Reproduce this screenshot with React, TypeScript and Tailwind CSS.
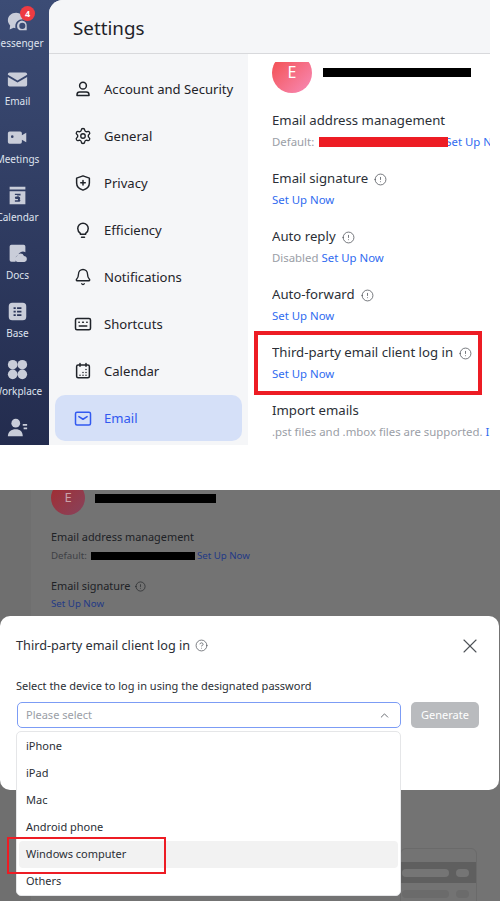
import { Bell, ChevronUp, CircleHelp, Info, Settings, X } from "lucide-react";
import type { ReactNode } from "react";

const font = "font-['Noto_Sans','Liberation_Sans',sans-serif]";

function Glyph({ children, size = 18 }: { children: ReactNode; size?: number }) {
  return (
    <svg
      viewBox="0 0 24 24"
      width={size}
      height={size}
      fill="none"
      stroke="currentColor"
      strokeWidth="2"
      strokeLinecap="round"
      strokeLinejoin="round"
    >
      {children}
    </svg>
  );
}

const railIcons: Record<string, ReactNode> = {
  messenger: (
    <>
      <path
        fillRule="evenodd"
        d="M10.500 2C5 2 1 5.800 1 10.500c0 2.300 1 4.400 2.600 6L3 21l4.600-1.800c.7.200 1.400.3 2.100.4a8 8 0 0 1-.2-2c0-4.700 3.500-8.100 8-8.100.8 0 1.600.1 2.300.4C18.700 5.300 15.100 2 10.500 2Z"
      />
      <path
        fillRule="evenodd"
        d="M17.500 11a6 6 0 0 0-6 6.200c0 2.400 1.200 4 3 4.800h8V17a5.500 5.500 0 0 0-5-6Zm0 2.500a3.500 3.500 0 1 1 0 7 3.500 3.500 0 0 1 0-7Z"
      />
    </>
  ),
  email: <path d="M3 4h18a2 2 0 0 1 2 2v.6L12 13 1 6.600V6a2 2 0 0 1 2-2Zm-2 5 11 6.400L23 9v9a2 2 0 0 1-2 2H3a2 2 0 0 1-2-2Z" />,
  meetings: (
    <path
      fillRule="evenodd"
      d="M3 5h12a2 2 0 0 1 2 2v2.500l5-3V17.500l-5-3V17a2 2 0 0 1-2 2H3a2 2 0 0 1-2-2V7a2 2 0 0 1 2-2Zm3 4.500a1.500 1.500 0 1 0 0 3 1.500 1.500 0 0 0 0-3Z"
    />
  ),
  calendar: (
    <path
      fillRule="evenodd"
      d="M3 2h18v3H3Zm0 5h18v15H3Zm6 3v1.500h4.500V13H10.500a1.500 1.500 0 0 0 0 3h2v1.500H9V19h4.500a1.500 1.500 0 0 0 1-2.800 1.500 1.500 0 0 0-1-2.700h-2V12h4v-2Z"
    />
  ),
  docs: (
    <>
      <path d="M5 2h14a2 2 0 0 1 2 2v6.500a6 6 0 0 0-8.500 3.500A5 5 0 0 0 10 21.500H5a2 2 0 0 1-2-2V4a2 2 0 0 1 2-2Z" />
      <path d="M15.500 12a4 4 0 0 1 3.800 2.800 3.500 3.500 0 0 1 .7 6.900h-8a3.500 3.500 0 0 1-.5-6.900 4 4 0 0 1 4-2.800Z" />
    </>
  ),
  base: (
    <path
      fillRule="evenodd"
      d="M6 2h12a4 4 0 0 1 4 4v12a4 4 0 0 1-4 4H6a4 4 0 0 1-4-4V6a4 4 0 0 1 4-4Zm1.500 5v2H10V7Zm4 0v2h5V7Zm-4 4v2H10v-2Zm4 0v2h5v-2Zm-4 4v2H10v-2Zm4 0v2h5v-2Z"
    />
  ),
  workplace: (
    <>
      <circle cx="6.500" cy="6.500" r="5.500" />
      <circle cx="17.500" cy="6.500" r="5.500" />
      <circle cx="6.500" cy="17.500" r="5.500" />
      <circle cx="17.500" cy="17.500" r="5.500" />
    </>
  ),
  contacts: (
    <>
      <circle cx="10" cy="7" r="5" />
      <path d="M1 22c0-5 4-8 9-8s8 3 8 8Z" />
      <path d="M18 8h5v2h-5Zm1 4h4v2h-4Z" />
    </>
  ),
};

const rail = [
  { id: "messenger", label: "Messenger", badge: "4" },
  { id: "email", label: "Email" },
  { id: "meetings", label: "Meetings" },
  { id: "calendar", label: "Calendar" },
  { id: "docs", label: "Docs" },
  { id: "base", label: "Base" },
  { id: "workplace", label: "Workplace" },
  { id: "contacts", label: "" },
];

const nav: { label: string; icon: ReactNode; active?: boolean }[] = [
  {
    label: "Account and Security",
    icon: (
      <Glyph>
        <circle cx="12" cy="7.500" r="4.500" />
        <path d="M4 20.500v-1a3.500 3.500 0 0 1 3.500-3.500h9a3.500 3.500 0 0 1 3.500 3.500v1Z" />
      </Glyph>
    ),
  },
  { label: "General", icon: <Settings size={18} strokeWidth={1.8} /> },
  {
    label: "Privacy",
    icon: (
      <Glyph>
        <path d="M12 2.500 20.500 5.500v6.500c0 4.800-3.500 8-8.500 9.500C7 20 3.500 16.800 3.500 12V5.500Z" />
        <path d="M12 8.500v6M9 11.500h6" />
      </Glyph>
    ),
  },
  {
    label: "Efficiency",
    icon: (
      <Glyph>
        <path d="M8.500 16.500C6.500 15 5 13 5 10a7 7 0 0 1 14 0c0 3-1.500 5-3.500 6.500v1h-7Z" />
        <path d="M10 21.500h4" />
      </Glyph>
    ),
  },
  { label: "Notifications", icon: <Bell size={18} strokeWidth={1.8} /> },
  {
    label: "Shortcuts",
    icon: (
      <Glyph>
        <rect x="2" y="4.500" width="20" height="15" rx="2" />
        <path d="M6.500 9.500h.5M11.500 9.500h1M17 9.500h.5M7 14.500h10" />
      </Glyph>
    ),
  },
  {
    label: "Calendar",
    icon: (
      <Glyph>
        <rect x="3.500" y="4" width="17" height="17" rx="2" />
        <path d="M8 2v3.500M16 2v3.500M16 10v.1M12 14v.1M16 14v.1M8 17.500v.1M12 17.500v.1M16 17.500v.1" />
      </Glyph>
    ),
  },
  {
    label: "Email",
    active: true,
    icon: (
      <Glyph size={19}>
        <rect x="2" y="3.500" width="20" height="17" rx="2" />
        <path d="M6.500 9.500 12 13l5.500-3.500" />
      </Glyph>
    ),
  },
];

function InfoTip() {
  return <Info size={13} strokeWidth={1.4} className="text-[#4b4f56] rotate-180" />;
}

function Link({ children }: { children: ReactNode }) {
  return <span className="text-[#2f6bf0]">{children}</span>;
}

function Setting({ title, tip, children }: { title: string; tip?: boolean; children: ReactNode }) {
  return (
    <div className="flex flex-col gap-px mb-[17px]">
      <div className="h-5 flex items-center gap-[6px] text-[13.2px] text-[#2b2f36] whitespace-nowrap">
        {title}
        {tip && <InfoTip />}
      </div>
      <div className="h-5 flex items-center gap-[3px] text-[11.4px] text-[#9a9ea6] whitespace-nowrap">{children}</div>
    </div>
  );
}

function Redacted({ className }: { className: string }) {
  return <div className={`absolute ${className}`} />;
}

export default function App() {
  return (
    <div className={`w-[500px] h-[901px] bg-white overflow-hidden flex flex-col ${font}`}>
      {/* Top capture: settings window */}
      <div className="h-[445px] flex shrink-0 overflow-hidden relative">
        <div className="w-[490px] flex bg-gradient-to-b from-[#3c4c75] to-[#232c4e]">
          <div className="w-[49px] shrink-0 overflow-hidden">
            <div className="w-[49px] ml-[-7px] flex flex-col items-center pt-[10px]">
              {rail.map((r) => (
                <div key={r.id} className="h-[58px] w-full shrink-0 flex flex-col items-center relative">
                  <svg viewBox="0 0 24 24" width={21} height={21} fill="#c9cdd9" className="mt-[1px]">
                    {railIcons[r.id]}
                  </svg>
                  <span className="mt-[4px] text-[10px] leading-[14px] text-[#dfe3ee] whitespace-nowrap">{r.label}</span>
                  {r.badge && (
                    <span className="absolute left-[27px] top-[-4px] w-[15px] h-[15px] rounded-full bg-[#ee3b42] text-white text-[9px] font-bold flex items-center justify-center">
                      {r.badge}
                    </span>
                  )}
                </div>
              ))}
            </div>
          </div>
          <div className="flex-1 flex flex-col rounded-tl-[14px] overflow-hidden bg-white">
            <div className="h-[54px] shrink-0 bg-[#f5f6f8] border-b border-[#d8d9dc] flex items-center pl-6 pt-[3px] text-[18.8px] text-[#1f2329]">
              Settings
            </div>
            <div className="flex-1 flex min-h-0">
              <div className="w-[199px] shrink-0 bg-[#f5f6f8] px-[6px] pt-3 flex flex-col gap-px">
                {nav.map((n) => (
                  <div
                    key={n.label}
                    className={`h-[46px] shrink-0 flex items-center gap-[12px] pl-[19px] rounded-[10px] text-[13.1px] whitespace-nowrap ${
                      n.active ? "bg-[#d5e0f8] text-[#3259f0]" : "text-[#1f2329]"
                    }`}
                  >
                    <span className="w-[18px] flex justify-center">{n.icon}</span>
                    <span className="pt-[2px]">{n.label}</span>
                  </div>
                ))}
              </div>
              <div className="flex-1 min-w-0 pt-2 pl-6 overflow-hidden">
                <div className="h-full overflow-hidden">
                  <div className="flex items-center gap-[11px] mt-[-9px] mb-[18px] h-10">
                    <div className="w-10 h-10 shrink-0 rounded-full bg-gradient-to-br from-[#f24545] to-[#f78ab8] text-white flex items-center justify-center text-[16px] pb-[2px]">
                      E
                    </div>
                  </div>
                  <Setting title="Email address management">
                    <span className="mr-[133px]">Default:</span>
                    <span className="text-[#2f6bf0] ml-[-5px]">Set Up Now</span>
                  </Setting>
                  <Setting title="Email signature" tip>
                    <Link>Set Up Now</Link>
                  </Setting>
                  <Setting title="Auto reply" tip>
                    Disabled <Link>Set Up Now</Link>
                  </Setting>
                  <Setting title="Auto-forward" tip>
                    <Link>Set Up Now</Link>
                  </Setting>
                  <Setting title="Third-party email client log in" tip>
                    <Link>Set Up Now</Link>
                  </Setting>
                  <Setting title="Import emails">
                    .pst files and .mbox files are supported. <Link>Import</Link>
                  </Setting>
                </div>
              </div>
            </div>
          </div>
        </div>
        {/* annotations */}
        <Redacted className="left-[323px] top-[68px] w-[148px] h-[9px] bg-black" />
        <Redacted className="left-[319px] top-[137px] w-[129px] h-[10px] bg-[#ed1c24]" />
        <Redacted className="left-[254px] top-[331px] w-[228px] h-[64px] border-[4.5px] border-[#ed1c24]" />
      </div>

      <div className="h-[45px] shrink-0 bg-white" />

      {/* Bottom capture: dialog over dimmed page */}
      <div className="flex-1 bg-[#737373] relative overflow-hidden flex">
        <div className="w-[31px] shrink-0 bg-[#6f6f6f]" />
        <div className="pl-5 flex-1 min-w-0">
          <div className="w-[34px] h-[34px] mt-[-9px] rounded-full bg-gradient-to-br from-[#a3282c] to-[#87425c] text-[#c9a3a8] flex items-center justify-center text-[13px]">
            E
          </div>
          <div className="mt-[12px] h-5 flex items-center text-[10.9px] text-[#202226] whitespace-nowrap">
            Email address management
          </div>
          <div className="h-[18px] flex items-center text-[9.7px] text-[#3e4045] whitespace-nowrap">
            <span className="mr-[110px]">Default:</span>
            <span className="text-[#233a86]">Set Up Now</span>
          </div>
          <div className="mt-[11px] h-[20px] flex items-center gap-[5px] text-[10.9px] text-[#202226] whitespace-nowrap">
            Email signature
            <Info size={11} strokeWidth={1.4} className="rotate-180" />
          </div>
          <div className="h-[16px] flex items-center text-[9.7px] text-[#233a86]">Set Up Now</div>
        </div>
        <Redacted className="left-[95px] top-[4px] w-[121px] h-[9px] bg-black" />
        <Redacted className="left-[91px] top-[62px] w-[104px] h-[8px] bg-black" />

        {/* faint page behind the dialog */}
        <div className="absolute left-[400px] top-[358px] w-[77px] h-[60px] border border-[#6a6a6a] rounded-t-[6px] pt-[13px] flex flex-col gap-[7px]">
          <div className="h-[21px] bg-[#5f5f5f] flex items-center gap-[7px] pl-px">
            <span className="w-[47px] h-2 rounded-full bg-[#757575]" />
            <span className="w-[13px] h-2 rounded-full bg-[#757575]" />
          </div>
          <div className="flex items-center gap-[7px] pl-px">
            <span className="w-[47px] h-2 rounded-full bg-[#6b6b6b]" />
            <span className="w-[13px] h-2 rounded-full bg-[#6b6b6b]" />
          </div>
        </div>

        {/* dialog */}
        <div className="absolute left-0 top-[126px] w-[499px] h-[174px] bg-white rounded-[10px] px-4 pt-5">
          <div className="flex items-center justify-between h-5">
            <div className="flex items-center gap-[5px] text-[12.7px] text-[#2b2f36] whitespace-nowrap">
              Third-party email client log in
              <CircleHelp size={13} strokeWidth={1.4} className="text-[#55595f]" />
            </div>
            <X size={24} strokeWidth={1.1} className="text-[#4e5257] mr-[1px] shrink-0" />
          </div>
          <div className="mt-[20px] h-[20px] flex items-center text-[11px] text-[#2b2f36] whitespace-nowrap">
            Select the device to log in using the designated password
          </div>
          <div className="mt-[6px] flex gap-[10px] pl-px pr-[4px]">
            <div className="flex-1 h-[26px] border-[1.5px] border-[#7c9cf5] rounded-[5px] flex items-center justify-between pl-2 pr-[9px] text-[11px] text-[#9a9ea6]">
              Please select
              <ChevronUp size={13} strokeWidth={1.6} className="text-[#55595f]" />
            </div>
            <div className="w-[68px] h-[26px] rounded-[5px] bg-[#b9bbbe] text-white text-[11px] flex items-center justify-center">
              Generate
            </div>
          </div>
        </div>

        {/* open select menu */}
        <div className="absolute left-4 top-[241px] w-[385px] h-[165px] bg-white border border-[#e5e6e8] rounded-[5px] px-[2px] pt-[1px] flex flex-col text-[11px] text-[#2b2f36]">
          {["iPhone", "iPad", "Mac", "Android phone", "Windows computer", "Others"].map((o) => (
            <div
              key={o}
              className={`h-[27px] shrink-0 flex items-center pl-[7px] rounded-[4px] ${
                o === "Windows computer" ? "bg-[#f2f2f2]" : ""
              }`}
            >
              {o}
            </div>
          ))}
        </div>
        <Redacted className="left-[7px] top-[347px] w-[159px] h-[37px] border-[2.5px] border-[#ed1c24]" />
      </div>
    </div>
  );
}
